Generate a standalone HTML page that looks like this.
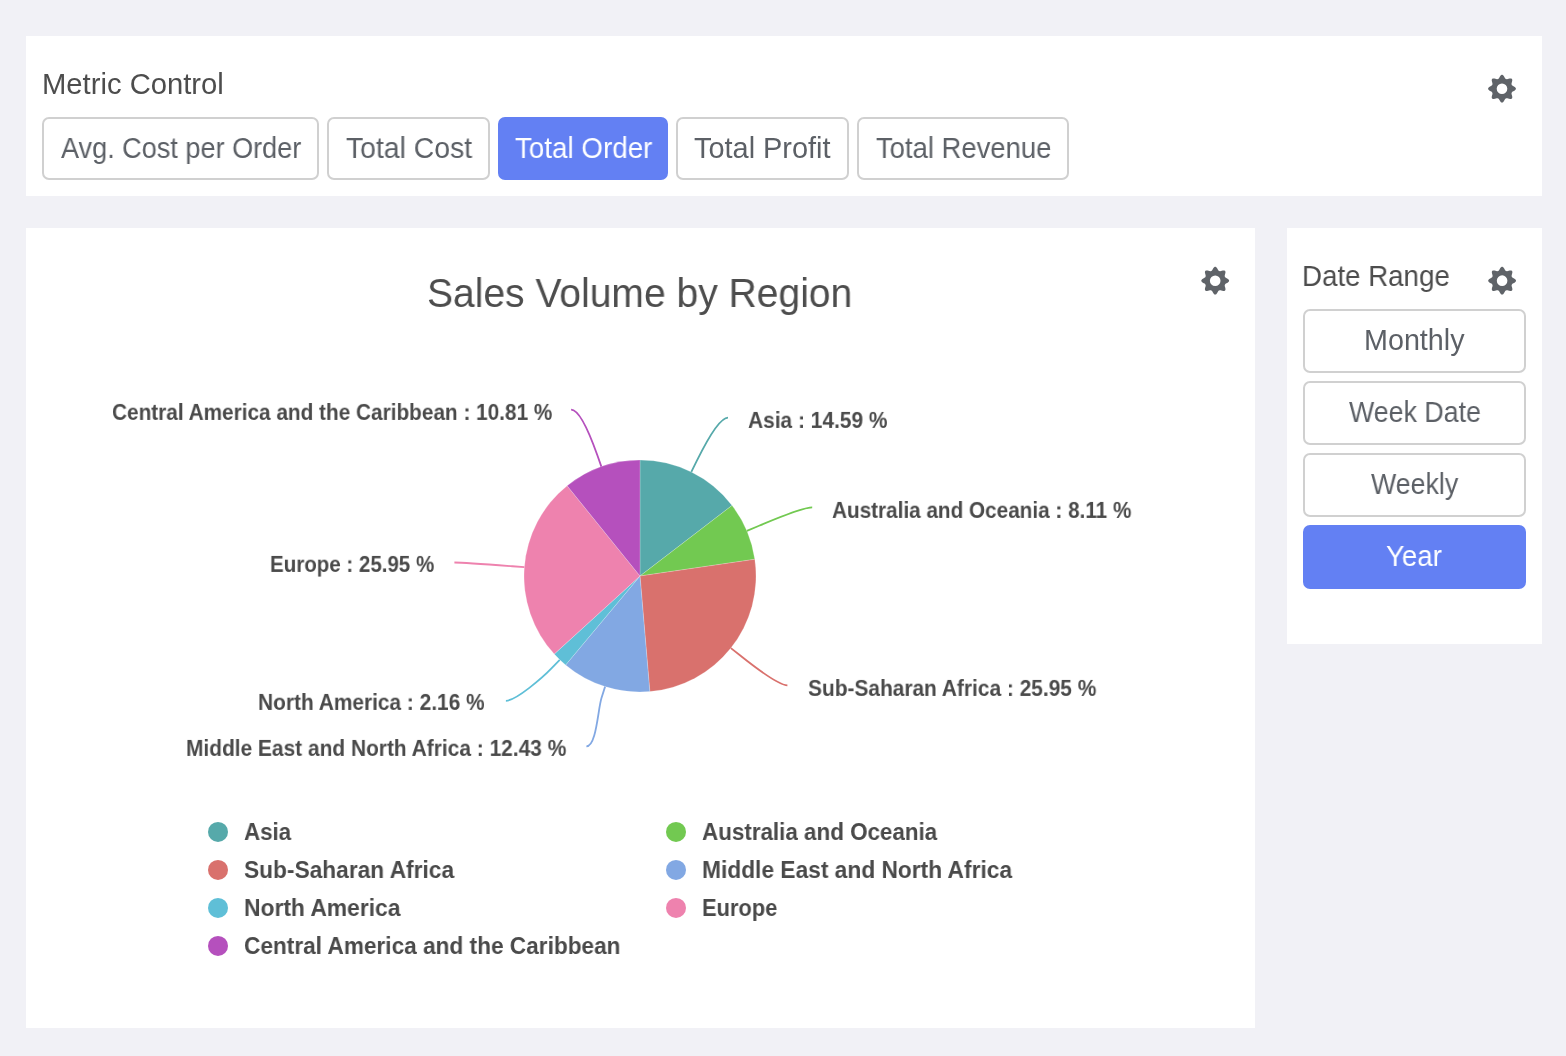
<!DOCTYPE html>
<html><head><meta charset="utf-8"><title>Dashboard</title>
<style>
html,body{margin:0;padding:0;width:1566px;height:1056px;overflow:hidden;background:#f1f1f6;}
.panel{position:absolute;background:#ffffff;}
.btn{position:absolute;box-sizing:border-box;border:2px solid #d0d0d0;border-radius:7px;background:#ffffff;}
.btn.on{background:#6380f3;border-color:#6380f3;}
.t{position:absolute;font-family:"Liberation Sans",sans-serif;line-height:1;white-space:nowrap;transform-origin:0 0;will-change:transform;}
svg{position:absolute;left:0;top:0;}
</style></head><body>
<div class="panel" style="left:26px;top:36px;width:1516px;height:160px"></div>
<div class="panel" style="left:26px;top:228px;width:1229px;height:800px"></div>
<div class="panel" style="left:1287px;top:228px;width:255px;height:416px"></div>
<svg width="1566" height="1056" viewBox="0 0 1566 1056">
<path d="M1502.00,74.80 L1502.36,74.85 L1502.72,75.00 L1503.06,75.24 L1503.38,75.56 L1503.68,75.94 L1503.96,76.35 L1504.21,76.78 L1504.44,77.21 L1504.66,77.61 L1504.87,77.98 L1505.08,78.29 L1505.30,78.54 L1505.53,78.74 L1505.77,78.89 L1506.02,79.00 L1506.28,79.10 L1506.55,79.16 L1506.85,79.18 L1507.18,79.16 L1507.55,79.09 L1507.96,78.98 L1508.40,78.85 L1508.86,78.71 L1509.35,78.59 L1509.84,78.49 L1510.31,78.43 L1510.77,78.44 L1511.18,78.51 L1511.54,78.65 L1511.83,78.87 L1512.05,79.16 L1512.19,79.52 L1512.26,79.93 L1512.27,80.39 L1512.21,80.86 L1512.11,81.35 L1511.99,81.84 L1511.85,82.30 L1511.72,82.74 L1511.61,83.15 L1511.54,83.52 L1511.52,83.85 L1511.54,84.15 L1511.60,84.42 L1511.70,84.68 L1511.81,84.93 L1511.96,85.17 L1512.16,85.40 L1512.41,85.62 L1512.72,85.83 L1513.09,86.04 L1513.49,86.26 L1513.92,86.49 L1514.35,86.74 L1514.76,87.02 L1515.14,87.32 L1515.46,87.64 L1515.70,87.98 L1515.85,88.34 L1515.90,88.70 L1515.85,89.06 L1515.70,89.42 L1515.46,89.76 L1515.14,90.08 L1514.76,90.38 L1514.35,90.66 L1513.92,90.91 L1513.49,91.14 L1513.09,91.36 L1512.72,91.57 L1512.41,91.78 L1512.16,92.00 L1511.96,92.23 L1511.81,92.47 L1511.70,92.72 L1511.60,92.98 L1511.54,93.25 L1511.52,93.55 L1511.54,93.88 L1511.61,94.25 L1511.72,94.66 L1511.85,95.10 L1511.99,95.56 L1512.11,96.05 L1512.21,96.54 L1512.27,97.01 L1512.26,97.47 L1512.19,97.88 L1512.05,98.24 L1511.83,98.53 L1511.54,98.75 L1511.18,98.89 L1510.77,98.96 L1510.31,98.97 L1509.84,98.91 L1509.35,98.81 L1508.86,98.69 L1508.40,98.55 L1507.96,98.42 L1507.55,98.31 L1507.18,98.24 L1506.85,98.22 L1506.55,98.24 L1506.28,98.30 L1506.02,98.40 L1505.77,98.51 L1505.53,98.66 L1505.30,98.86 L1505.08,99.11 L1504.87,99.42 L1504.66,99.79 L1504.44,100.19 L1504.21,100.62 L1503.96,101.05 L1503.68,101.46 L1503.38,101.84 L1503.06,102.16 L1502.72,102.40 L1502.36,102.55 L1502.00,102.60 L1501.64,102.55 L1501.28,102.40 L1500.94,102.16 L1500.62,101.84 L1500.32,101.46 L1500.04,101.05 L1499.79,100.62 L1499.56,100.19 L1499.34,99.79 L1499.13,99.42 L1498.92,99.11 L1498.70,98.86 L1498.47,98.66 L1498.23,98.51 L1497.98,98.40 L1497.72,98.30 L1497.45,98.24 L1497.15,98.22 L1496.82,98.24 L1496.45,98.31 L1496.04,98.42 L1495.60,98.55 L1495.14,98.69 L1494.65,98.81 L1494.16,98.91 L1493.69,98.97 L1493.23,98.96 L1492.82,98.89 L1492.46,98.75 L1492.17,98.53 L1491.95,98.24 L1491.81,97.88 L1491.74,97.47 L1491.73,97.01 L1491.79,96.54 L1491.89,96.05 L1492.01,95.56 L1492.15,95.10 L1492.28,94.66 L1492.39,94.25 L1492.46,93.88 L1492.48,93.55 L1492.46,93.25 L1492.40,92.98 L1492.30,92.72 L1492.19,92.47 L1492.04,92.23 L1491.84,92.00 L1491.59,91.78 L1491.28,91.57 L1490.91,91.36 L1490.51,91.14 L1490.08,90.91 L1489.65,90.66 L1489.24,90.38 L1488.86,90.08 L1488.54,89.76 L1488.30,89.42 L1488.15,89.06 L1488.10,88.70 L1488.15,88.34 L1488.30,87.98 L1488.54,87.64 L1488.86,87.32 L1489.24,87.02 L1489.65,86.74 L1490.08,86.49 L1490.51,86.26 L1490.91,86.04 L1491.28,85.83 L1491.59,85.62 L1491.84,85.40 L1492.04,85.17 L1492.19,84.93 L1492.30,84.68 L1492.40,84.42 L1492.46,84.15 L1492.48,83.85 L1492.46,83.52 L1492.39,83.15 L1492.28,82.74 L1492.15,82.30 L1492.01,81.84 L1491.89,81.35 L1491.79,80.86 L1491.73,80.39 L1491.74,79.93 L1491.81,79.52 L1491.95,79.16 L1492.17,78.87 L1492.46,78.65 L1492.82,78.51 L1493.23,78.44 L1493.69,78.43 L1494.16,78.49 L1494.65,78.59 L1495.14,78.71 L1495.60,78.85 L1496.04,78.98 L1496.45,79.09 L1496.82,79.16 L1497.15,79.18 L1497.45,79.16 L1497.72,79.10 L1497.98,79.00 L1498.23,78.89 L1498.47,78.74 L1498.70,78.54 L1498.92,78.29 L1499.13,77.98 L1499.34,77.61 L1499.56,77.21 L1499.79,76.78 L1500.04,76.35 L1500.32,75.94 L1500.62,75.56 L1500.94,75.24 L1501.28,75.00 L1501.64,74.85 Z M1507.30,88.70 A5.3,5.3 0 1,0 1496.70,88.70 A5.3,5.3 0 1,0 1507.30,88.70 Z" fill="#5f6368" fill-rule="evenodd"/>
<path d="M1215.20,266.80 L1215.56,266.85 L1215.92,267.00 L1216.26,267.24 L1216.58,267.56 L1216.88,267.94 L1217.16,268.35 L1217.41,268.78 L1217.64,269.21 L1217.86,269.61 L1218.07,269.98 L1218.28,270.29 L1218.50,270.54 L1218.73,270.74 L1218.97,270.89 L1219.22,271.00 L1219.48,271.10 L1219.75,271.16 L1220.05,271.18 L1220.38,271.16 L1220.75,271.09 L1221.16,270.98 L1221.60,270.85 L1222.06,270.71 L1222.55,270.59 L1223.04,270.49 L1223.51,270.43 L1223.97,270.44 L1224.38,270.51 L1224.74,270.65 L1225.03,270.87 L1225.25,271.16 L1225.39,271.52 L1225.46,271.93 L1225.47,272.39 L1225.41,272.86 L1225.31,273.35 L1225.19,273.84 L1225.05,274.30 L1224.92,274.74 L1224.81,275.15 L1224.74,275.52 L1224.72,275.85 L1224.74,276.15 L1224.80,276.42 L1224.90,276.68 L1225.01,276.93 L1225.16,277.17 L1225.36,277.40 L1225.61,277.62 L1225.92,277.83 L1226.29,278.04 L1226.69,278.26 L1227.12,278.49 L1227.55,278.74 L1227.96,279.02 L1228.34,279.32 L1228.66,279.64 L1228.90,279.98 L1229.05,280.34 L1229.10,280.70 L1229.05,281.06 L1228.90,281.42 L1228.66,281.76 L1228.34,282.08 L1227.96,282.38 L1227.55,282.66 L1227.12,282.91 L1226.69,283.14 L1226.29,283.36 L1225.92,283.57 L1225.61,283.78 L1225.36,284.00 L1225.16,284.23 L1225.01,284.47 L1224.90,284.72 L1224.80,284.98 L1224.74,285.25 L1224.72,285.55 L1224.74,285.88 L1224.81,286.25 L1224.92,286.66 L1225.05,287.10 L1225.19,287.56 L1225.31,288.05 L1225.41,288.54 L1225.47,289.01 L1225.46,289.47 L1225.39,289.88 L1225.25,290.24 L1225.03,290.53 L1224.74,290.75 L1224.38,290.89 L1223.97,290.96 L1223.51,290.97 L1223.04,290.91 L1222.55,290.81 L1222.06,290.69 L1221.60,290.55 L1221.16,290.42 L1220.75,290.31 L1220.38,290.24 L1220.05,290.22 L1219.75,290.24 L1219.48,290.30 L1219.22,290.40 L1218.97,290.51 L1218.73,290.66 L1218.50,290.86 L1218.28,291.11 L1218.07,291.42 L1217.86,291.79 L1217.64,292.19 L1217.41,292.62 L1217.16,293.05 L1216.88,293.46 L1216.58,293.84 L1216.26,294.16 L1215.92,294.40 L1215.56,294.55 L1215.20,294.60 L1214.84,294.55 L1214.48,294.40 L1214.14,294.16 L1213.82,293.84 L1213.52,293.46 L1213.24,293.05 L1212.99,292.62 L1212.76,292.19 L1212.54,291.79 L1212.33,291.42 L1212.12,291.11 L1211.90,290.86 L1211.67,290.66 L1211.43,290.51 L1211.18,290.40 L1210.92,290.30 L1210.65,290.24 L1210.35,290.22 L1210.02,290.24 L1209.65,290.31 L1209.24,290.42 L1208.80,290.55 L1208.34,290.69 L1207.85,290.81 L1207.36,290.91 L1206.89,290.97 L1206.43,290.96 L1206.02,290.89 L1205.66,290.75 L1205.37,290.53 L1205.15,290.24 L1205.01,289.88 L1204.94,289.47 L1204.93,289.01 L1204.99,288.54 L1205.09,288.05 L1205.21,287.56 L1205.35,287.10 L1205.48,286.66 L1205.59,286.25 L1205.66,285.88 L1205.68,285.55 L1205.66,285.25 L1205.60,284.98 L1205.50,284.72 L1205.39,284.47 L1205.24,284.23 L1205.04,284.00 L1204.79,283.78 L1204.48,283.57 L1204.11,283.36 L1203.71,283.14 L1203.28,282.91 L1202.85,282.66 L1202.44,282.38 L1202.06,282.08 L1201.74,281.76 L1201.50,281.42 L1201.35,281.06 L1201.30,280.70 L1201.35,280.34 L1201.50,279.98 L1201.74,279.64 L1202.06,279.32 L1202.44,279.02 L1202.85,278.74 L1203.28,278.49 L1203.71,278.26 L1204.11,278.04 L1204.48,277.83 L1204.79,277.62 L1205.04,277.40 L1205.24,277.17 L1205.39,276.93 L1205.50,276.68 L1205.60,276.42 L1205.66,276.15 L1205.68,275.85 L1205.66,275.52 L1205.59,275.15 L1205.48,274.74 L1205.35,274.30 L1205.21,273.84 L1205.09,273.35 L1204.99,272.86 L1204.93,272.39 L1204.94,271.93 L1205.01,271.52 L1205.15,271.16 L1205.37,270.87 L1205.66,270.65 L1206.02,270.51 L1206.43,270.44 L1206.89,270.43 L1207.36,270.49 L1207.85,270.59 L1208.34,270.71 L1208.80,270.85 L1209.24,270.98 L1209.65,271.09 L1210.02,271.16 L1210.35,271.18 L1210.65,271.16 L1210.92,271.10 L1211.18,271.00 L1211.43,270.89 L1211.67,270.74 L1211.90,270.54 L1212.12,270.29 L1212.33,269.98 L1212.54,269.61 L1212.76,269.21 L1212.99,268.78 L1213.24,268.35 L1213.52,267.94 L1213.82,267.56 L1214.14,267.24 L1214.48,267.00 L1214.84,266.85 Z M1220.50,280.70 A5.3,5.3 0 1,0 1209.90,280.70 A5.3,5.3 0 1,0 1220.50,280.70 Z" fill="#5f6368" fill-rule="evenodd"/>
<path d="M1502.10,266.80 L1502.46,266.85 L1502.82,267.00 L1503.16,267.24 L1503.48,267.56 L1503.78,267.94 L1504.06,268.35 L1504.31,268.78 L1504.54,269.21 L1504.76,269.61 L1504.97,269.98 L1505.18,270.29 L1505.40,270.54 L1505.63,270.74 L1505.87,270.89 L1506.12,271.00 L1506.38,271.10 L1506.65,271.16 L1506.95,271.18 L1507.28,271.16 L1507.65,271.09 L1508.06,270.98 L1508.50,270.85 L1508.96,270.71 L1509.45,270.59 L1509.94,270.49 L1510.41,270.43 L1510.87,270.44 L1511.28,270.51 L1511.64,270.65 L1511.93,270.87 L1512.15,271.16 L1512.29,271.52 L1512.36,271.93 L1512.37,272.39 L1512.31,272.86 L1512.21,273.35 L1512.09,273.84 L1511.95,274.30 L1511.82,274.74 L1511.71,275.15 L1511.64,275.52 L1511.62,275.85 L1511.64,276.15 L1511.70,276.42 L1511.80,276.68 L1511.91,276.93 L1512.06,277.17 L1512.26,277.40 L1512.51,277.62 L1512.82,277.83 L1513.19,278.04 L1513.59,278.26 L1514.02,278.49 L1514.45,278.74 L1514.86,279.02 L1515.24,279.32 L1515.56,279.64 L1515.80,279.98 L1515.95,280.34 L1516.00,280.70 L1515.95,281.06 L1515.80,281.42 L1515.56,281.76 L1515.24,282.08 L1514.86,282.38 L1514.45,282.66 L1514.02,282.91 L1513.59,283.14 L1513.19,283.36 L1512.82,283.57 L1512.51,283.78 L1512.26,284.00 L1512.06,284.23 L1511.91,284.47 L1511.80,284.72 L1511.70,284.98 L1511.64,285.25 L1511.62,285.55 L1511.64,285.88 L1511.71,286.25 L1511.82,286.66 L1511.95,287.10 L1512.09,287.56 L1512.21,288.05 L1512.31,288.54 L1512.37,289.01 L1512.36,289.47 L1512.29,289.88 L1512.15,290.24 L1511.93,290.53 L1511.64,290.75 L1511.28,290.89 L1510.87,290.96 L1510.41,290.97 L1509.94,290.91 L1509.45,290.81 L1508.96,290.69 L1508.50,290.55 L1508.06,290.42 L1507.65,290.31 L1507.28,290.24 L1506.95,290.22 L1506.65,290.24 L1506.38,290.30 L1506.12,290.40 L1505.87,290.51 L1505.63,290.66 L1505.40,290.86 L1505.18,291.11 L1504.97,291.42 L1504.76,291.79 L1504.54,292.19 L1504.31,292.62 L1504.06,293.05 L1503.78,293.46 L1503.48,293.84 L1503.16,294.16 L1502.82,294.40 L1502.46,294.55 L1502.10,294.60 L1501.74,294.55 L1501.38,294.40 L1501.04,294.16 L1500.72,293.84 L1500.42,293.46 L1500.14,293.05 L1499.89,292.62 L1499.66,292.19 L1499.44,291.79 L1499.23,291.42 L1499.02,291.11 L1498.80,290.86 L1498.57,290.66 L1498.33,290.51 L1498.08,290.40 L1497.82,290.30 L1497.55,290.24 L1497.25,290.22 L1496.92,290.24 L1496.55,290.31 L1496.14,290.42 L1495.70,290.55 L1495.24,290.69 L1494.75,290.81 L1494.26,290.91 L1493.79,290.97 L1493.33,290.96 L1492.92,290.89 L1492.56,290.75 L1492.27,290.53 L1492.05,290.24 L1491.91,289.88 L1491.84,289.47 L1491.83,289.01 L1491.89,288.54 L1491.99,288.05 L1492.11,287.56 L1492.25,287.10 L1492.38,286.66 L1492.49,286.25 L1492.56,285.88 L1492.58,285.55 L1492.56,285.25 L1492.50,284.98 L1492.40,284.72 L1492.29,284.47 L1492.14,284.23 L1491.94,284.00 L1491.69,283.78 L1491.38,283.57 L1491.01,283.36 L1490.61,283.14 L1490.18,282.91 L1489.75,282.66 L1489.34,282.38 L1488.96,282.08 L1488.64,281.76 L1488.40,281.42 L1488.25,281.06 L1488.20,280.70 L1488.25,280.34 L1488.40,279.98 L1488.64,279.64 L1488.96,279.32 L1489.34,279.02 L1489.75,278.74 L1490.18,278.49 L1490.61,278.26 L1491.01,278.04 L1491.38,277.83 L1491.69,277.62 L1491.94,277.40 L1492.14,277.17 L1492.29,276.93 L1492.40,276.68 L1492.50,276.42 L1492.56,276.15 L1492.58,275.85 L1492.56,275.52 L1492.49,275.15 L1492.38,274.74 L1492.25,274.30 L1492.11,273.84 L1491.99,273.35 L1491.89,272.86 L1491.83,272.39 L1491.84,271.93 L1491.91,271.52 L1492.05,271.16 L1492.27,270.87 L1492.56,270.65 L1492.92,270.51 L1493.33,270.44 L1493.79,270.43 L1494.26,270.49 L1494.75,270.59 L1495.24,270.71 L1495.70,270.85 L1496.14,270.98 L1496.55,271.09 L1496.92,271.16 L1497.25,271.18 L1497.55,271.16 L1497.82,271.10 L1498.08,271.00 L1498.33,270.89 L1498.57,270.74 L1498.80,270.54 L1499.02,270.29 L1499.23,269.98 L1499.44,269.61 L1499.66,269.21 L1499.89,268.78 L1500.14,268.35 L1500.42,267.94 L1500.72,267.56 L1501.04,267.24 L1501.38,267.00 L1501.74,266.85 Z M1507.40,280.70 A5.3,5.3 0 1,0 1496.80,280.70 A5.3,5.3 0 1,0 1507.40,280.70 Z" fill="#5f6368" fill-rule="evenodd"/>
<path d="M640,576 L640.00,460.00 A116,116 0 0,1 732.06,505.42 Z" fill="#56a9aa" stroke="#ffffff" stroke-width="0.5" stroke-opacity="0.4" stroke-linejoin="round"/>
<path d="M640,576 L732.06,505.42 A116,116 0 0,1 754.79,559.29 Z" fill="#72c951" stroke="#ffffff" stroke-width="0.5" stroke-opacity="0.4" stroke-linejoin="round"/>
<path d="M640,576 L754.79,559.29 A116,116 0 0,1 649.83,691.58 Z" fill="#d9716d" stroke="#ffffff" stroke-width="0.5" stroke-opacity="0.4" stroke-linejoin="round"/>
<path d="M640,576 L649.83,691.58 A116,116 0 0,1 565.61,665.01 Z" fill="#82a8e3" stroke="#ffffff" stroke-width="0.5" stroke-opacity="0.4" stroke-linejoin="round"/>
<path d="M640,576 L565.61,665.01 A116,116 0 0,1 554.25,654.12 Z" fill="#5fbfd7" stroke="#ffffff" stroke-width="0.5" stroke-opacity="0.4" stroke-linejoin="round"/>
<path d="M640,576 L554.25,654.12 A116,116 0 0,1 567.13,485.74 Z" fill="#ee82ae" stroke="#ffffff" stroke-width="0.5" stroke-opacity="0.4" stroke-linejoin="round"/>
<path d="M640,576 L567.13,485.74 A116,116 0 0,1 640.00,460.00 Z" fill="#b550bd" stroke="#ffffff" stroke-width="0.5" stroke-opacity="0.4" stroke-linejoin="round"/>
<path d="M728.00,417.60 C718.00,417.60 701.95,450.45 696.64,461.21 L691.33,471.97" fill="none" stroke="#56a9aa" stroke-width="1.8"/>
<path d="M812.20,507.40 C802.20,507.40 768.99,521.57 757.93,526.24 L746.87,530.90" fill="none" stroke="#72c951" stroke-width="1.8"/>
<path d="M787.40,685.30 C777.40,685.30 749.67,663.02 740.27,655.56 L730.87,648.10" fill="none" stroke="#d9716d" stroke-width="1.8"/>
<path d="M586.40,746.40 C596.40,746.40 597.87,709.51 601.48,698.07 L605.09,686.62" fill="none" stroke="#82a8e3" stroke-width="1.8"/>
<path d="M505.90,700.80 C515.90,700.80 543.14,677.09 551.44,668.42 L559.75,659.76" fill="none" stroke="#5fbfd7" stroke-width="1.8"/>
<path d="M454.40,562.50 C464.40,562.50 500.41,565.32 512.37,566.24 L524.34,567.15" fill="none" stroke="#ee82ae" stroke-width="1.8"/>
<path d="M571.10,409.60 C581.10,409.60 593.36,444.00 597.36,455.31 L601.36,466.63" fill="none" stroke="#b550bd" stroke-width="1.8"/>
<circle cx="218" cy="831.9" r="10" fill="#56a9aa"/>
<circle cx="676" cy="831.9" r="10" fill="#72c951"/>
<circle cx="218" cy="869.9" r="10" fill="#d9716d"/>
<circle cx="676" cy="869.9" r="10" fill="#82a8e3"/>
<circle cx="218" cy="907.9" r="10" fill="#5fbfd7"/>
<circle cx="676" cy="907.9" r="10" fill="#ee82ae"/>
<circle cx="218" cy="945.9" r="10" fill="#b550bd"/>
</svg>
<div class="t" style="left:41.96px;top:70.27px;font-size:28.70px;font-weight:400;color:#4d4d4d;transform:scale(1.0185,1.0000)">Metric Control</div>
<div class="btn" style="left:42px;top:117px;width:277px;height:63px"></div>
<div class="t" style="left:61.00px;top:134.27px;font-size:28.70px;font-weight:400;color:#5c6066;transform:scale(0.9440,1.0000)">Avg. Cost per Order</div>
<div class="btn" style="left:327px;top:117px;width:163px;height:63px"></div>
<div class="t" style="left:345.53px;top:134.27px;font-size:28.70px;font-weight:400;color:#5c6066;transform:scale(0.9887,1.0000)">Total Cost</div>
<div class="btn on" style="left:498px;top:117px;width:170px;height:63px"></div>
<div class="t" style="left:514.94px;top:134.27px;font-size:28.70px;font-weight:400;color:#ffffff;transform:scale(0.9681,1.0000)">Total Order</div>
<div class="btn" style="left:676px;top:117px;width:173px;height:63px"></div>
<div class="t" style="left:694.42px;top:134.27px;font-size:28.70px;font-weight:400;color:#5c6066;transform:scale(1.0076,1.0000)">Total Profit</div>
<div class="btn" style="left:857px;top:117px;width:212px;height:63px"></div>
<div class="t" style="left:875.55px;top:134.27px;font-size:28.70px;font-weight:400;color:#5c6066;transform:scale(0.9563,1.0000)">Total Revenue</div>
<div class="t" style="left:1302.48px;top:261.37px;font-size:29.28px;font-weight:400;color:#4d4d4d;transform:scale(0.9462,1.0000)">Date Range</div>
<div class="btn" style="left:1303px;top:309px;width:223px;height:64px"></div>
<div class="t" style="left:1364.00px;top:326.47px;font-size:28.70px;font-weight:400;color:#5c6066;transform:scale(1.0006,1.0000)">Monthly</div>
<div class="btn" style="left:1303px;top:381px;width:223px;height:64px"></div>
<div class="t" style="left:1349.20px;top:398.27px;font-size:28.70px;font-weight:400;color:#5c6066;transform:scale(0.9329,1.0000)">Week Date</div>
<div class="btn" style="left:1303px;top:453px;width:223px;height:64px"></div>
<div class="t" style="left:1371.10px;top:470.27px;font-size:28.70px;font-weight:400;color:#5c6066;transform:scale(0.9321,1.0000)">Weekly</div>
<div class="btn on" style="left:1303px;top:525px;width:223px;height:64px"></div>
<div class="t" style="left:1386.45px;top:541.97px;font-size:28.70px;font-weight:400;color:#ffffff;transform:scale(0.9631,1.0000)">Year</div>
<div class="t" style="left:427.14px;top:274.15px;font-size:40.29px;font-weight:400;color:#4d4d4d;transform:scale(0.9689,1.0000)">Sales Volume by Region</div>
<div class="t" style="left:747.68px;top:409.96px;font-size:23.20px;font-weight:700;color:#4a4a4a;transform:scale(0.9017,0.9412)">Asia : 14.59 %</div>
<div class="t" style="left:831.89px;top:500.16px;font-size:23.20px;font-weight:700;color:#4a4a4a;transform:scale(0.8935,0.9412)">Australia and Oceania : 8.11 %</div>
<div class="t" style="left:808.27px;top:677.86px;font-size:23.20px;font-weight:700;color:#4a4a4a;transform:scale(0.9009,0.9412)">Sub-Saharan Africa : 25.95 %</div>
<div class="t" style="left:185.85px;top:737.86px;font-size:23.20px;font-weight:700;color:#4a4a4a;transform:scale(0.9016,0.9412)">Middle East and North Africa : 12.43 %</div>
<div class="t" style="left:257.95px;top:691.96px;font-size:23.20px;font-weight:700;color:#4a4a4a;transform:scale(0.9005,0.9412)">North America : 2.16 %</div>
<div class="t" style="left:270.07px;top:553.96px;font-size:23.20px;font-weight:700;color:#4a4a4a;transform:scale(0.8849,0.9412)">Europe : 25.95 %</div>
<div class="t" style="left:111.77px;top:401.96px;font-size:23.20px;font-weight:700;color:#4a4a4a;transform:scale(0.8961,0.9412)">Central America and the Caribbean : 10.81 %</div>
<div class="t" style="left:243.65px;top:819.96px;font-size:24.49px;font-weight:700;color:#4a4a4a;transform:scale(0.9118,1.0000)">Asia</div>
<div class="t" style="left:701.85px;top:819.96px;font-size:24.49px;font-weight:700;color:#4a4a4a;transform:scale(0.9146,1.0000)">Australia and Oceania</div>
<div class="t" style="left:243.82px;top:857.96px;font-size:24.49px;font-weight:700;color:#4a4a4a;transform:scale(0.9282,1.0000)">Sub-Saharan Africa</div>
<div class="t" style="left:701.63px;top:857.96px;font-size:24.49px;font-weight:700;color:#4a4a4a;transform:scale(0.9290,1.0000)">Middle East and North Africa</div>
<div class="t" style="left:243.63px;top:895.96px;font-size:24.49px;font-weight:700;color:#4a4a4a;transform:scale(0.9324,1.0000)">North America</div>
<div class="t" style="left:701.89px;top:895.96px;font-size:24.49px;font-weight:700;color:#4a4a4a;transform:scale(0.8933,1.0000)">Europe</div>
<div class="t" style="left:243.59px;top:933.96px;font-size:24.49px;font-weight:700;color:#4a4a4a;transform:scale(0.9244,1.0000)">Central America and the Caribbean</div>
</body></html>
